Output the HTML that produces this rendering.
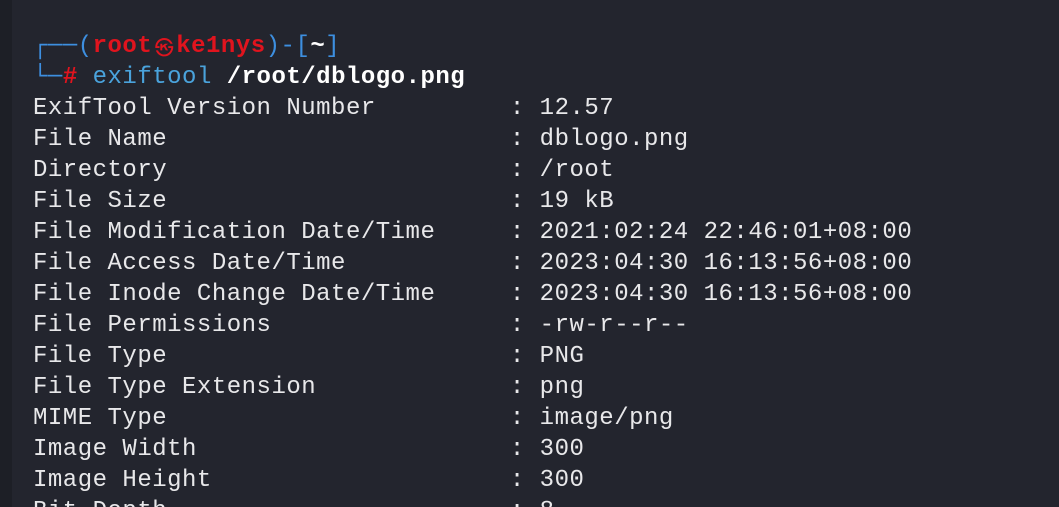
<!DOCTYPE html>
<html><head><style>
html,body{margin:0;padding:0;width:1059px;height:507px;overflow:hidden;background:#23252e;}
.wrap{position:relative;width:1059px;height:507px;overflow:hidden;background:#23252e;}
.strip{position:absolute;left:0;top:0;width:12px;height:507px;background:#1d1f26;}
pre{position:absolute;left:33px;top:31px;margin:0;font-family:"Liberation Mono",monospace;font-size:24px;letter-spacing:0.5px;line-height:31px;color:#e8e8ea;}
.b{color:#3d8fe0}.r{color:#e0141e;font-weight:bold}.c{color:#4aa3dc}.w{color:#fff;font-weight:bold}
.sym{display:inline-block;width:24px;height:31px;line-height:31px;text-align:center;font-size:19px;letter-spacing:0;vertical-align:top;font-family:"Noto Sans CJK JP",sans-serif;}
</style></head><body>
<div class="wrap">
<div class="strip"></div>
<pre><span class="b">┌──(</span><span class="r">root<span class="sym">㉿</span>ke1nys</span><span class="b">)-[</span><span class="w">~</span><span class="b">]</span>
<span class="b">└─</span><span class="r">#</span> <span class="c">exiftool</span> <span class="w">/root/dblogo.png</span>
ExifTool Version Number         : 12.57
File Name                       : dblogo.png
Directory                       : /root
File Size                       : 19 kB
File Modification Date/Time     : 2021:02:24 22:46:01+08:00
File Access Date/Time           : 2023:04:30 16:13:56+08:00
File Inode Change Date/Time     : 2023:04:30 16:13:56+08:00
File Permissions                : -rw-r--r--
File Type                       : PNG
File Type Extension             : png
MIME Type                       : image/png
Image Width                     : 300
Image Height                    : 300
Bit Depth                       : 8</pre>
</div>
</body></html>
